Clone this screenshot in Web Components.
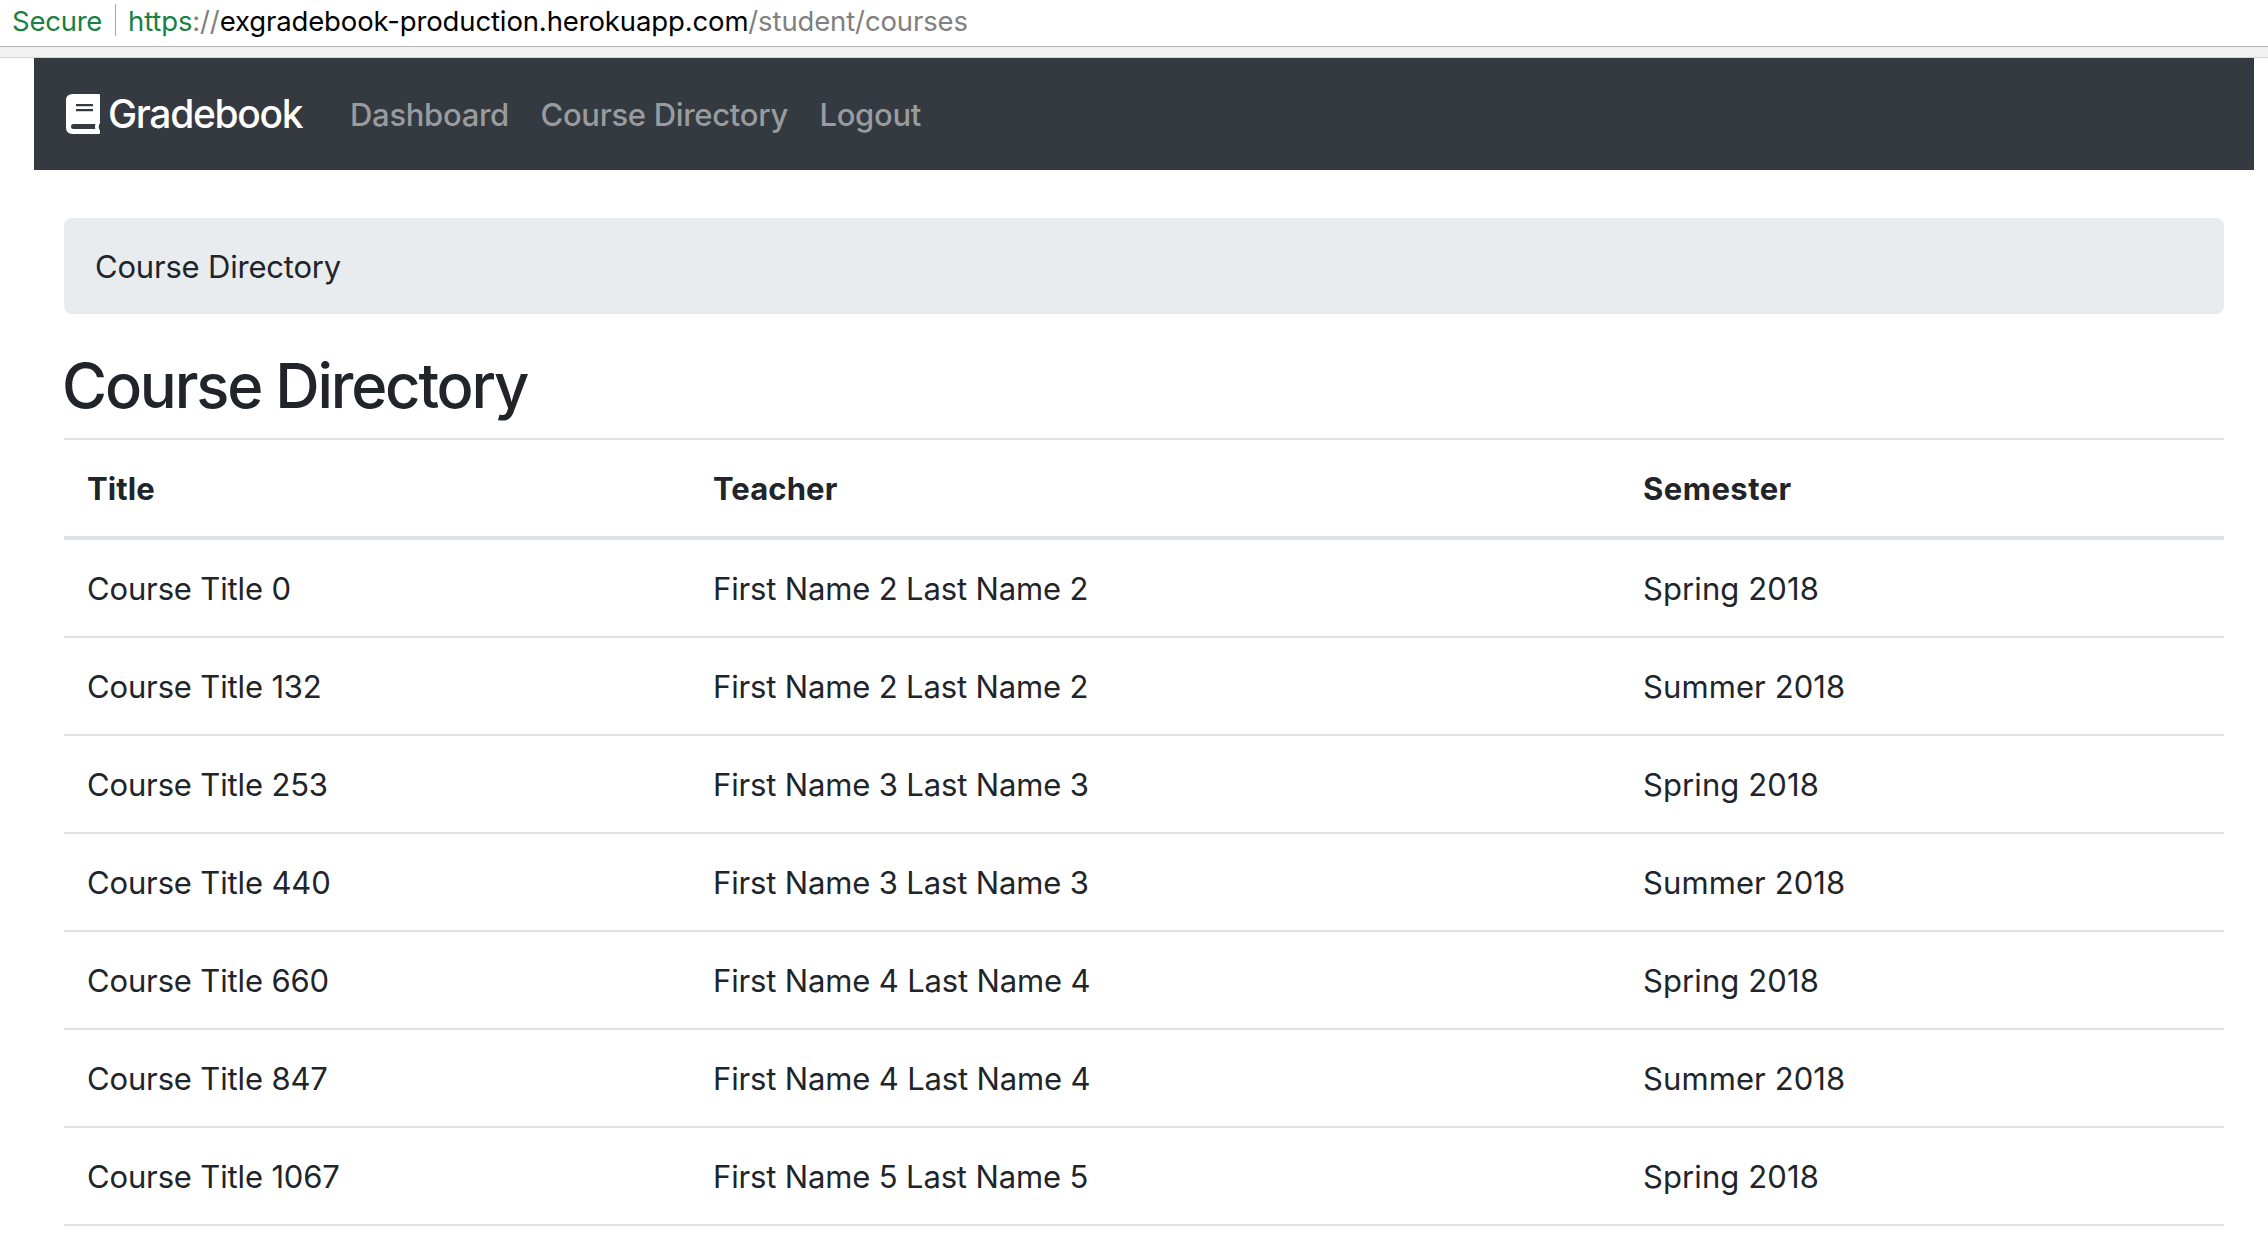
<!DOCTYPE html>
<html lang="en">
<head>
<meta charset="utf-8">
<title>Gradebook</title>
<style>
html,body{margin:0;background:#fff}
body{font-family:Inter,"Liberation Sans",sans-serif;font-size:31px;line-height:48px;color:#212529}
</style>
</head>
<body>
<gradebook-page></gradebook-page>
<script>
class BaseElement extends HTMLElement {
  connectedCallback() {
    if (!this.shadowRoot) this.attachShadow({mode: 'open'}).innerHTML = this.render();
  }
}

class AddressBar extends BaseElement {
  render() {
    return `<style>
      :host{display:block}
      .row{display:flex;align-items:flex-start;box-sizing:border-box;height:46px;padding:4px 0 0 12px;font-size:27.5px;line-height:34px;letter-spacing:-.13px;white-space:nowrap;color:#808080}
      .secure{width:103px;color:#188045;letter-spacing:-.25px}
      .rule{width:1px;height:32px;margin-right:12px;background:#a6a6a6}
      .scheme{color:#188045}.host{color:#000}
      .edge{box-sizing:border-box;height:12px;background:#f1f1f1;border-top:1px solid #b3b3b3;border-bottom:1px solid #d3d3d3}
    </style>
    <div class="row"><span class="secure">Secure</span><i class="rule"></i><span><span class="scheme">https</span>://<span class="host">exgradebook-production.herokuapp.com</span>/student/courses</span></div>
    <div class="edge"></div>`;
  }
}

class BookIcon extends BaseElement {
  render() {
    return `<style>:host{display:block;width:34px;height:40px}svg{display:block}</style>
    <svg width="34" height="40" viewBox="0 0 34 40"><path fill="#fff" fill-rule="evenodd" d="M6.5 0H33Q34 0 34 1V28.5Q34 29.6 33.1 30.4Q32.4 32.6 33.1 35.2Q34 36 34 37V39Q34 40 33 40H6.5Q0 40 0 33.5V6.5Q0 0 6.5 0ZM10 10V12.3H27V10ZM10 15V17.3H27V15ZM7.5 30Q5 30 5 32.5Q5 35 7.5 35H29.3Q28.8 32.5 29.3 30Z"/></svg>`;
  }
}

class NavBar extends BaseElement {
  render() {
    return `<style>
      :host{display:flex;align-items:center;box-sizing:border-box;height:112px;margin:0 14px 0 34px;padding-left:32px;background:#343a40;white-space:nowrap}
      .brand{margin-left:8px;width:242px;color:#fff;font-size:39px;line-height:60px;font-weight:450;letter-spacing:-1.35px}
      ::slotted(nav-link){margin-right:31.5px}
    </style>
    <book-icon></book-icon><span class="brand">Gradebook</span><slot></slot>`;
  }
}

class NavLink extends BaseElement {
  render() {
    return `<style>:host{display:block;color:#999c9f;font-weight:450;letter-spacing:-.3px;padding-top:2px}</style><slot></slot>`;
  }
}

class BreadcrumbBar extends BaseElement {
  render() {
    return `<style>:host{display:block;box-sizing:border-box;height:96px;padding:25px 31px 23px;border-radius:8px;background:#e9ecef;letter-spacing:-.2px}</style><slot></slot>`;
  }
}

class PageHeading extends BaseElement {
  render() {
    return `<style>h1{margin:0 0 0 -2px;font-size:61.5px;line-height:76px;font-weight:500;letter-spacing:-2.2px}:host{display:block;padding:34px 0 14px}</style><h1><slot></slot></h1>`;
  }
}

class CourseRow extends BaseElement {
  render() {
    return `<style>
      :host{display:grid;grid-template-columns:626px 930px 1fr;border-bottom:2px solid #dee2e6;letter-spacing:-.15px}
      :host([head]){font-weight:700;letter-spacing:.1px;border-top:2px solid #dee2e6;border-bottom-width:4px}
      span{padding:25px 23px 23px;height:48px;box-sizing:content-box}
      span:last-child{letter-spacing:.1px}
      :host([head]) span:last-child{letter-spacing:.45px}
    </style>` + ['course', 'teacher', 'semester'].map(k => `<span>${this.getAttribute(k)}</span>`).join('');
  }
}

class CourseTable extends BaseElement {
  render() {
    const rows = [[0, 2], [132, 2], [253, 3], [440, 3], [660, 4], [847, 4], [1067, 5]];
    return `<style>:host{display:block}</style>
    <course-row head course="Title" teacher="Teacher" semester="Semester"></course-row>` +
    rows.map(([c, n], i) => `<course-row course="Course Title ${c}" teacher="First Name ${n} Last Name ${n}" semester="${i % 2 ? 'Summer' : 'Spring'} 2018"></course-row>`).join('');
  }
}

class GradebookPage extends BaseElement {
  render() {
    return `<style>:host{display:block;height:1260px;overflow:hidden}main{display:block;margin:48px 44px 0 64px}</style>
    <address-bar></address-bar>
    <nav-bar><nav-link>Dashboard</nav-link><nav-link>Course Directory</nav-link><nav-link>Logout</nav-link></nav-bar>
    <main>
      <breadcrumb-bar>Course Directory</breadcrumb-bar>
      <page-heading>Course Directory</page-heading>
      <course-table></course-table>
    </main>`;
  }
}

customElements.define('address-bar', AddressBar);
customElements.define('book-icon', BookIcon);
customElements.define('nav-link', NavLink);
customElements.define('nav-bar', NavBar);
customElements.define('breadcrumb-bar', BreadcrumbBar);
customElements.define('page-heading', PageHeading);
customElements.define('course-row', CourseRow);
customElements.define('course-table', CourseTable);
customElements.define('gradebook-page', GradebookPage);
</script>
</body>
</html>
